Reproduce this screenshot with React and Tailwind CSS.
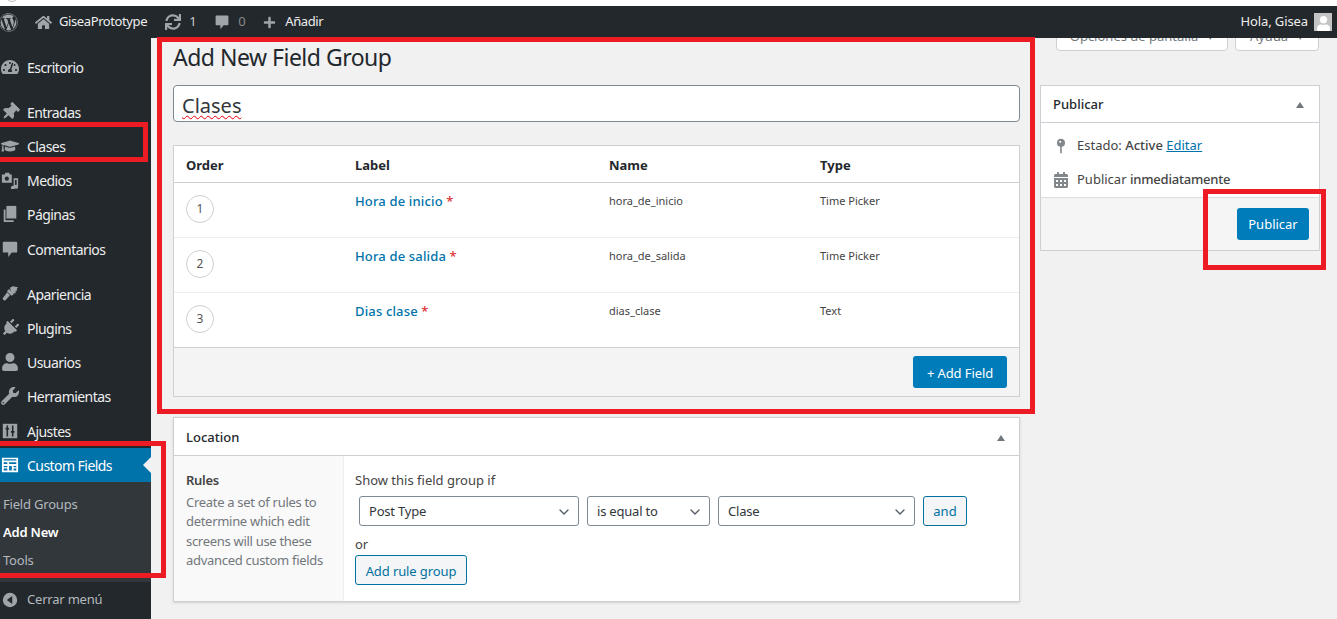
import React from 'react';
import { ChevronDown } from 'lucide-react';
import {
  FaWordpress, FaHome, FaSync, FaPlus, FaUser, FaTachometerAlt, FaThumbtack,
  FaGraduationCap, FaPlug, FaWrench, FaCalendarAlt,
} from 'react-icons/fa';

// dashicons the icon packs do not have
const MediaIcon = ({ className }) => (
  <svg viewBox="0 0 20 20" className={className} fill="currentColor">
    <path d="M1 4h3l1-2h4l1 2h2v9H1z" />
    <circle cx="6.5" cy="8.5" r="2.3" fill="#23282d" />
    <path d="M14 8h5v9.5a2.2 2.2 0 1 1-1.6-2V10h-2v8.5a2.2 2.2 0 1 1-1.4-2z" />
  </svg>
);
const PagesIcon = ({ className }) => (
  <svg viewBox="0 0 20 20" className={className} fill="currentColor">
    <path d="M6 1h11v14H6z" />
    <path d="M3 5h2v12h9v2H3z" />
  </svg>
);
const BubbleIcon = ({ className }) => (
  <svg viewBox="0 0 20 20" className={className} fill="currentColor">
    <path d="M3 2h14a1 1 0 0 1 1 1v10a1 1 0 0 1-1 1h-5l-4 5v-5H3a1 1 0 0 1-1-1V3a1 1 0 0 1 1-1z" />
  </svg>
);
const BrushIcon = ({ className }) => (
  <svg viewBox="0 0 20 20" className={className} fill="currentColor">
    <path d="M10 3l3-1.500 6 1-1.500 2 .5 1.500-2 1 .5 2-2.500.5L12 11z" />
    <path d="M9 4.500l5 6-2.500 1.500-5-5z" />
    <path d="M7 8l3 3.500-5 5.500c-1.500 1-3.500-.5-3-2.500z" />
  </svg>
);
const SlidersIcon = ({ className }) => (
  <svg viewBox="0 0 20 20" className={className}>
    <path d="M2 2h16v16H2z" fill="currentColor" />
    <path d="M7 4v12M13 4v12M5 7.500h4M11 11h4" stroke="#23282d" strokeWidth="1.800" fill="none" />
  </svg>
);
const FieldsIcon = ({ className }) => (
  <svg viewBox="0 0 20 20" className={className} fill="currentColor">
    <path fillRule="evenodd" d="M1 2h18v16H1zM3 7v2h4V7zm6 0v2h8V7zM3 11v1.500h4V11zm0 3v2h4v-2zm6-3v5h3v-5zm5 0v1.500h3V11zm0 3v2h3v-2zM3 3.500V5h14V3.500z" />
  </svg>
);
const CollapseIcon = ({ className }) => (
  <svg viewBox="0 0 20 20" className={className}>
    <circle cx="10" cy="10" r="8" fill="currentColor" />
    <path d="M12.500 5.500v9L6.500 10z" fill="#23282d" />
  </svg>
);
const KeyPinIcon = ({ className }) => (
  <svg viewBox="0 0 20 20" className={className} fill="currentColor">
    <path fillRule="evenodd" d="M10 1a5 5 0 0 1 1 9.900V19H9v-8.100A5 5 0 0 1 10 1zM9 3.500a1.300 1.300 0 1 0 .01 0z" />
  </svg>
);

const PinIcon = ({ className }) => <FaThumbtack className={`${className} rotate-45`} />;
const PlugIcon = ({ className }) => <FaPlug className={`${className} rotate-45`} />;

const menu = [
  { label: 'Escritorio', icon: FaTachometerAlt, top: 12 },
  { label: 'Entradas', icon: PinIcon, top: 11 },
  { label: 'Clases', icon: FaGraduationCap },
  { label: 'Medios', icon: MediaIcon },
  { label: 'Páginas', icon: PagesIcon },
  { label: 'Comentarios', icon: BubbleIcon, top: 1 },
  { label: 'Apariencia', icon: BrushIcon, top: 11 },
  { label: 'Plugins', icon: PlugIcon },
  { label: 'Usuarios', icon: FaUser },
  { label: 'Herramientas', icon: FaWrench },
  { label: 'Ajustes', icon: SlidersIcon, top: 1 },
];

const fields = [
  { n: 1, label: 'Hora de inicio', name: 'hora_de_inicio', type: 'Time Picker' },
  { n: 2, label: 'Hora de salida', name: 'hora_de_salida', type: 'Time Picker' },
  { n: 3, label: 'Dias clase', name: 'dias_clase', type: 'Text' },
];

const Select = ({ value, width }) => (
  <div className={`${width} h-[30px] flex items-center justify-between pl-[9px] pr-[6px] pt-px bg-white border border-[#7e8993] rounded-[3px] text-[13px] tracking-[-0.2px] text-[#32373c]`}>
    <span>{value}</span>
    <ChevronDown size={16} strokeWidth={2} className="text-[#555d66]" />
  </div>
);

const App = () => {
  return (
    <div className="relative w-[1337px] h-[619px] overflow-hidden bg-[#f1f1f1] font-['Noto_Sans',sans-serif] text-[13px] text-[#444]">
      <div className="h-[6px] bg-white overflow-hidden">
        <div className="ml-[5px] mt-[-12px] w-[14px] h-[14px] rounded-full border border-[#bbb]" />
      </div>

      {/* admin bar */}
      <div className="h-[32px] bg-[#23282d] flex items-center justify-between text-[13px] tracking-[-0.4px] text-[#eee]">
        <div className="flex items-center">
          <FaWordpress size={19} className="ml-[-1px] text-[#a0a5aa]" />
          <FaHome size={17} className="ml-[17px] text-[#a0a5aa]" />
          <span className="ml-[7px]">GiseaPrototype</span>
          <FaSync size={16} className="ml-[18px] text-[#a0a5aa]" />
          <span className="ml-[8px] text-[#c8cbce]">1</span>
          <BubbleIcon className="ml-[18px] w-[16px] h-[16px] text-[#a0a5aa]" />
          <span className="ml-[8px] text-[#888]">0</span>
          <FaPlus size={13} className="ml-[18px] text-[#a0a5aa]" />
          <span className="ml-[9px]">Añadir</span>
        </div>
        <div className="flex items-center mr-[5px]">
          <span className="tracking-[-0.1px]">Hola, Gisea</span>
          <div className="ml-[6px] w-[18px] h-[18px] bg-[#c4c4c4] flex items-end justify-center overflow-hidden">
            <FaUser size={15} className="text-white" />
          </div>
        </div>
      </div>

      <div className="flex h-[581px]">
        {/* sidebar */}
        <div className="w-[151px] shrink-0 bg-[#23282d] text-[14px] tracking-[-0.55px] text-[#eee]">
          {menu.map(({ label, icon: Icon, top }) => (
            <div key={label} style={{ marginTop: top || 0 }} className="h-[34px] flex items-center">
              <Icon className="ml-[1px] w-[18px] h-[18px] text-[#9ea3a8]" />
              <span className="ml-[8px] pt-px">{label}</span>
            </div>
          ))}
          <div className="relative h-[34px] flex items-center bg-[#0073aa] text-white">
            <FieldsIcon className="ml-[1px] w-[18px] h-[18px]" />
            <span className="ml-[8px] pt-px">Custom Fields</span>
            <div className="absolute right-0 top-[9px] border-y-[8px] border-r-[8px] border-y-transparent border-r-[#f1f1f1]" />
          </div>
          <div className="h-[100px] bg-[#32373c] pt-[9px] text-[13px] tracking-[-0.2px] text-[#b4b9be]">
            <div className="h-[28px] flex items-center pl-[3px]">Field Groups</div>
            <div className="h-[28px] flex items-center pl-[3px] font-semibold text-white">Add New</div>
            <div className="h-[28px] flex items-center pl-[3px]">Tools</div>
          </div>
          <div className="mt-px h-[34px] flex items-center text-[#b4b9be] text-[13px] tracking-[-0.2px]">
            <CollapseIcon className="ml-[1px] w-[18px] h-[18px] text-[#a0a5aa]" />
            <span className="ml-[8px]">Cerrar menú</span>
          </div>
        </div>

        {/* content */}
        <div className="flex-1 flex pl-[22px]">
          <div className="w-[847px] shrink-0">
            <h1 className="h-[47px] pt-[1px] text-[23px] leading-[36px] tracking-[-0.5px] text-[#23282d]">Add New Field Group</h1>
            <div className="h-[37px] flex items-center px-[8px] pt-[5px] bg-white border border-[#7e8993] rounded-[4px] text-[20px] text-[#32373c]">
              <span className="underline decoration-wavy decoration-red-600 decoration-1 underline-offset-2">Clases</span>
            </div>

            {/* fields */}
            <div className="mt-[23px] h-[252px] flex flex-col bg-white border border-[#ccd0d4]">
              <div className="h-[37px] pt-[3px] grid grid-cols-[181px_254px_211px_1fr] items-center border-b border-[#ccd0d4] font-bold text-[#23282d]">
                <span className="pl-[12px]">Order</span>
                <span>Label</span>
                <span>Name</span>
                <span>Type</span>
              </div>
              {fields.map((f) => (
                <div key={f.n} className="h-[55px] grid grid-cols-[181px_254px_211px_1fr] border-b border-[#eee] last:border-b-0">
                  <div className="pl-[12px] pt-[12px]">
                    <div className="w-[28px] h-[28px] rounded-full border border-[#ccd0d4] flex items-center justify-center text-[12px] text-[#555]">{f.n}</div>
                  </div>
                  <div className="pt-[9px] font-medium tracking-[0.15px] text-[#0073aa]">
                    {f.label} <span className="text-[#dc3232]">*</span>
                  </div>
                  <div className="pt-[10px] text-[11px] text-[#444]">{f.name}</div>
                  <div className="pt-[10px] text-[11px] text-[#444]">{f.type}</div>
                </div>
              ))}
              <div className="flex-1 flex items-center justify-end pr-[12px] bg-[#f4f4f4] border-t border-[#ccd0d4] -mt-px">
                <div className="w-[94px] h-[32px] pt-[4px] flex items-center justify-center bg-[#007cba] rounded-[3px] text-white tracking-[-0.1px]">+ Add Field</div>
              </div>
            </div>

            {/* location */}
            <div className="mt-[20px] h-[185px] flex flex-col bg-white border border-[#ccd0d4] shadow-sm">
              <div className="h-[38px] pt-[2px] shrink-0 flex items-center justify-between px-[12px] border-b border-[#ccd0d4] font-medium text-[#23282d]">
                <span>Location</span>
                <div className="mr-[2px] border-x-[4px] border-b-[6px] border-x-transparent border-b-[#72777c]" />
              </div>
              <div className="flex-1 flex">
                <div className="w-[170px] shrink-0 bg-[#f9f9f9] border-r border-[#eee] pl-[12px] pt-[15px] leading-[19.5px] tracking-[-0.3px] text-[#72777c]">
                  <div className="font-semibold text-[#444]">Rules</div>
                  <p className="mt-[2px]">Create a set of rules to determine which edit screens will use these advanced custom fields</p>
                </div>
                <div className="flex-1 pl-[11px] pt-[14px]">
                  <div className="h-[20px] leading-[20px] text-[#444]">Show this field group if</div>
                  <div className="mt-[6px] ml-[4px] flex gap-[8px]">
                    <Select value="Post Type" width="w-[220px]" />
                    <Select value="is equal to" width="w-[123px]" />
                    <Select value="Clase" width="w-[197px]" />
                    <div className="w-[44px] h-[30px] pt-[2px] flex items-center justify-center bg-[#f3f5f6] border border-[#0071a1] rounded-[3px] text-[#0071a1]">and</div>
                  </div>
                  <div className="mt-[8px] h-[20px] leading-[20px]">or</div>
                  <div className="mt-[1px] w-[112px] h-[30px] pt-[3px] flex items-center justify-center bg-[#f3f5f6] border border-[#0071a1] rounded-[3px] text-[#0071a1] tracking-[-0.1px]">Add rule group</div>
                </div>
              </div>
            </div>
          </div>

          {/* right column */}
          <div className="ml-[20px] w-[280px] shrink-0">
            <div className="h-[13px] overflow-hidden flex items-end justify-end gap-[7px] pr-px text-[#72777c]">
              <div className="w-[172px] h-[28px] flex items-center justify-center gap-[8px] bg-white border border-[#ccd0d4] rounded-b-[4px]">Opciones de pantalla <span className="text-[8px]">▼</span></div>
              <div className="w-[84px] h-[28px] flex items-center justify-center gap-[8px] bg-white border border-[#ccd0d4] rounded-b-[4px]">Ayuda <span className="text-[8px]">▼</span></div>
            </div>
            <div className="mt-[34px] h-[166px] flex flex-col bg-white border border-[#ccd0d4]">
              <div className="h-[37px] pt-[2px] shrink-0 flex items-center justify-between pl-[12px] pr-[15px] border-b border-[#ccd0d4] font-medium text-[#23282d]">
                <span>Publicar</span>
                <div className="border-x-[4px] border-b-[6px] border-x-transparent border-b-[#72777c]" />
              </div>
              <div className="h-[74px] shrink-0 pt-[12px]">
                <div className="h-[22px] flex items-center">
                  <KeyPinIcon className="ml-[12px] w-[16px] h-[18px] text-[#82878c]" />
                  <span className="ml-[8px]">Estado: <span className="font-medium">Active</span> <span className="text-[#0073aa] underline">Editar</span></span>
                </div>
                <div className="mt-[12px] h-[22px] flex items-center">
                  <FaCalendarAlt size={16} className="ml-[12px] w-[16px] text-[#82878c]" />
                  <span className="ml-[8px]">Publicar <span className="font-medium tracking-[-0.2px]">inmediatamente</span></span>
                </div>
              </div>
              <div className="flex-1 flex items-center justify-end pr-[10px] bg-[#f5f5f5] border-t border-[#ddd]">
                <div className="w-[72px] h-[32px] pt-[2px] flex items-center justify-center bg-[#007cba] rounded-[3px] text-white">Publicar</div>
              </div>
            </div>
          </div>
        </div>
      </div>

      {/* red annotation boxes drawn over the screenshot */}
      <div className="absolute left-[157px] top-[37px] w-[878px] h-[377px] border-[5px] border-[#ed1c24]" />
      <div className="absolute left-[-5px] top-[122px] w-[153px] h-[40px] border-[5px] border-[#ed1c24]" />
      <div className="absolute left-[-5px] top-[441px] w-[171px] h-[137px] border-[5px] border-[#ed1c24]" />
      <div className="absolute left-[1203px] top-[189px] w-[123px] h-[81px] border-[5px] border-[#ed1c24]" />
    </div>
  );
};

export default App;
